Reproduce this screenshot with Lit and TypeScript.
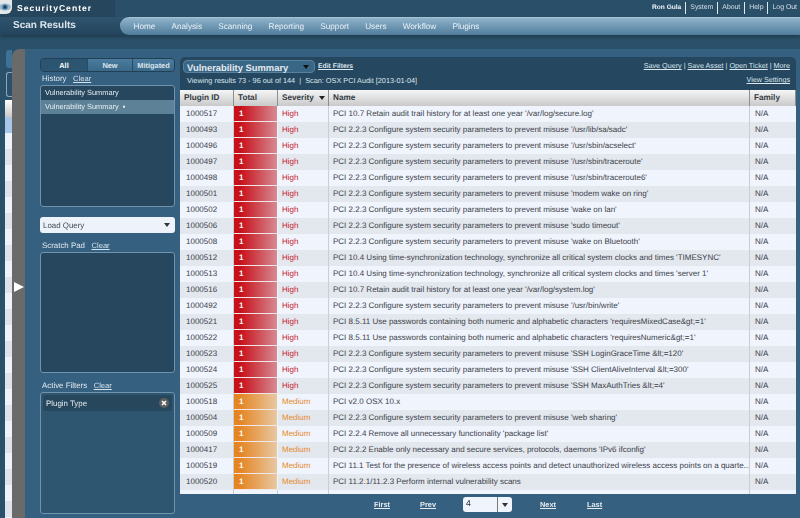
import { LitElement, html, css } from "lit";
import { customElement } from "lit/decorators.js";

const H = "High", M = "Medium";
const P = "PCI 2.2.3 Configure system security parameters to prevent misuse ";
const rows: [string, string, string][] = [
  ["1000517", H, "PCI 10.7 Retain audit trail history for at least one year '/var/log/secure.log'"],
  ["1000493", H, P + "'/usr/lib/sa/sadc'"],
  ["1000496", H, P + "'/usr/sbin/acselect'"],
  ["1000497", H, P + "'/usr/sbin/traceroute'"],
  ["1000498", H, P + "'/usr/sbin/traceroute6'"],
  ["1000501", H, P + "'modem wake on ring'"],
  ["1000502", H, P + "'wake on lan'"],
  ["1000506", H, P + "'sudo timeout'"],
  ["1000508", H, P + "'wake on Bluetooth'"],
  ["1000512", H, "PCI 10.4 Using time-synchronization technology, synchronize all critical system clocks and times 'TIMESYNC'"],
  ["1000513", H, "PCI 10.4 Using time-synchronization technology, synchronize all critical system clocks and times 'server 1'"],
  ["1000516", H, "PCI 10.7 Retain audit trail history for at least one year '/var/log/system.log'"],
  ["1000492", H, P + "'/usr/bin/write'"],
  ["1000521", H, "PCI 8.5.11 Use passwords containing both numeric and alphabetic characters 'requiresMixedCase&gt;=1'"],
  ["1000522", H, "PCI 8.5.11 Use passwords containing both numeric and alphabetic characters 'requiresNumeric&gt;=1'"],
  ["1000523", H, P + "'SSH LoginGraceTime &lt;=120'"],
  ["1000524", H, P + "'SSH ClientAliveInterval &lt;=300'"],
  ["1000525", H, P + "'SSH MaxAuthTries &lt;=4'"],
  ["1000518", M, "PCI v2.0 OSX 10.x"],
  ["1000504", M, P + "'web sharing'"],
  ["1000509", M, "PCI 2.2.4 Remove all unnecessary functionality 'package list'"],
  ["1000417", M, "PCI 2.2.2 Enable only necessary and secure services, protocols, daemons 'IPv6 ifconfig'"],
  ["1000519", M, "PCI 11.1 Test for the presence of wireless access points and detect unauthorized wireless access points on a quarte..."],
  ["1000520", M, "PCI 11.2.1/11.2.3 Perform internal vulnerability scans"],
];
const nav = ["Home", "Analysis", "Scanning", "Reporting", "Support", "Users", "Workflow", "Plugins"];

@customElement("app-root")
export class AppRoot extends LitElement {
  static styles = css`
    :host { display: block; width: 800px; height: 518px; overflow: hidden; background: #2b5069; font-family: "Liberation Sans", Arial, sans-serif; font-size: 8px; color: #e4ebf1; text-rendering: geometricPrecision; }
    * { box-sizing: border-box; }
    a { color: inherit; text-decoration: underline; }
    .shot { height: 518px; filter: blur(.25px); }
    .top { height: 17px; display: flex; align-items: center; background: #2a4f69; }
    .brand { width: 115px; height: 17px; display: flex; align-items: center; gap: 5px; background: #26465e; color: #fff; font-weight: 700; font-size: 8.6px; letter-spacing: 1px; padding-bottom: 1px; }
    .logo { width: 12px; height: 14px; background: #e4e8ea; border-radius: 0 0 6px 0; display: flex; align-items: center; margin-top: -2px; }
    .user { margin-left: auto; display: flex; align-items: center; font-size: 6.9px; color: #d5e0e8; padding-right: 3px; padding-bottom: 1px; }
    .user span { padding: 0 4px; border-right: 1px solid #e2e8ee; line-height: 12px; }
    .user span:first-child { font-weight: 700; font-size: 6.6px; color: #eef2f5; }
    .user span:last-child { border: 0; padding-right: 0; }
    .sub { height: 18px; display: flex; background: linear-gradient(#2f546e, #24445c); box-shadow: 0 2px 3px rgba(20, 40, 55, .5); position: relative; }
    .title { width: 120px; padding: 3px 0 0 13px; font-size: 10px; font-weight: 700; color: #dbe5ec; }
    .nav { flex: 1; display: flex; align-items: center; gap: 16.2px; padding: 0 0 1px 13.5px; border-radius: 9px 0 0 9px; background: linear-gradient(#8fb3cb, #4f7c9b); border-top: 1px solid #a6c3d6; color: #eaf1f6; font-size: 8.2px; height: 18px; }
    .band { height: 14px; background: #2b5069; }
    .desk { height: 469px; display: flex; position: relative; }
    .behind { width: 12px; background: #2b5069; display: flex; flex-direction: column; padding: 1px 0 0 6px; gap: 4px; overflow: hidden; }
    .b1 { height: 18px; flex: none; background: #3f7297; border-radius: 3px 0 0 3px; }
    .b2 { height: 25px; flex: none; border: 1px solid #8aa8bd; border-right: 0; border-radius: 3px 0 0 3px; background: #2b5069; }
    .b3 { flex: 1; margin-top: -1px; margin-left: -1px; display: flex; flex-direction: column; }
    .b3h { height: 17px; flex: none; background: linear-gradient(#fff, #c9c9c9); }
    .b3b { height: 16px; flex: none; background: #a9c6e6; }
    .b3r { flex: 1; background: repeating-linear-gradient(#eef2fa 0 16px, #dfe4ec 16px 32px); }
    .window { flex: 1; display: flex; background: #36607f; min-width: 0; border-radius: 8px 0 0 0; overflow: hidden; }
    .grip { width: 13px; background: #6a6a6a; display: flex; align-items: center; justify-content: center; padding-top: 7px; }
    .grip i { width: 0; height: 0; border-left: 10px solid #fff; border-top: 5px solid transparent; border-bottom: 5px solid transparent; }
    .left { width: 155px; padding: 9px 5px 0 15px; display: flex; flex-direction: column; }
    .tabs { display: grid; grid-template-columns: 46px 45px 1fr; height: 14px; border-radius: 4px; overflow: hidden; border: 1px solid #1f4057; }
    .tabs div { display: flex; align-items: center; justify-content: center; background: linear-gradient(#4b7da0, #3a6888); border-left: 1px solid #274b63; color: #dbe5ec; font-weight: 700; font-size: 7.4px; }
    .tabs div:first-child { background: #2b5570; border-left: 0; color: #fff; }
    .lab { height: 13px; flex: none; display: flex; align-items: center; gap: 6.5px; padding-left: 2px; font-size: 7.9px; color: #dfe7ee; }
    .lab a { font-size: 7.6px; color: #d3e1ec; }
    .spaced { margin-top: 6px; }
    .box { background: #26475e; border: 1px solid #7094ad; border-radius: 3px; }
    .history { height: 122px; flex: none; margin-bottom: 10px; }
    .history div { height: 14px; line-height: 13px; padding-left: 4px; font-size: 7.4px; color: #e6edf2; }
    .history div.sel { background: #5d8298; }
    .load { height: 16px; flex: none; background: #edf2fb; border-radius: 3px; display: flex; align-items: center; justify-content: space-between; padding: 0 5px 0 3px; color: #404a52; font-size: 7.9px; }
    .tri { width: 0; height: 0; border-left: 3.5px solid transparent; border-right: 3.5px solid transparent; border-top: 4px solid #333; }
    .scratch { height: 121px; flex: none; }
    .filters { height: 122px; flex: none; background: #2f5670; padding: 2px 2px; }
    .chip { height: 16px; background: #27475d; border-radius: 2px; display: flex; align-items: center; justify-content: space-between; padding: 0 3px 0 3px; color: #e4ebf1; font-size: 7.9px; }
    .chip svg { display: block; }
    .main { width: 616px; padding-top: 8px; display: flex; flex-direction: column; }
    .bar { height: 33px; background: #25475f; border-radius: 5px 5px 0 0; padding: 3px 6px 0 3px; display: grid; grid-template-columns: 1fr auto; }
    .barl { display: flex; flex-direction: column; }
    .barl1 { display: flex; align-items: center; gap: 3px; height: 13px; }
    .vs { width: 132px; height: 13px; background: #3a6685; border: 1px solid #56819e; border-radius: 4px; display: flex; align-items: center; justify-content: space-between; padding: 1px 5px 0 3px; font-weight: 700; font-size: 9.4px; color: #e4ebf1; }
    .vs .tri { border-top-color: #111; }
    .edit { font-size: 6.8px; font-weight: 700; color: #dce6ee; padding-bottom: 1px; }
    .view { padding: 3px 0 0 4px; font-size: 7.3px; line-height: 10px; color: #dce6ee; }
    .barr { text-align: right; font-size: 7.2px; color: #dce6ee; display: flex; flex-direction: column; gap: 5px; padding-top: 1px; }
    .barr div { line-height: 9px; }
    .grid { height: 404px; background: #f0f4fd; display: grid; grid-template-columns: 54px 44px 51px 421px 46px; align-content: start; color: #3a4048; }
    .grid > div { height: 16px; line-height: 15px; white-space: nowrap; overflow: hidden; }
    .grid > div.h { background: linear-gradient(#f6f6f6, #c9c9c9); font-weight: 700; font-size: 8.2px; color: #333a42; padding-left: 4px; border-right: 1px solid #8a8f94; line-height: 15px; }
    .grid > div.h:last-child { border: 0; }
    .grid > div.sev { display: flex; align-items: center; gap: 5px; padding-bottom: 1px; }
    .sev .tri { border-top-color: #222; }
    .c { padding-left: 5px; border-right: 1px solid #c9ced6; }
    .alt { background: #e3e7ee; }
    .id { font-size: 8px; padding-left: 6px; }
    .name { font-size: 8px; padding-left: 4px; }
    .fam { border: 0; font-size: 8px; padding-left: 5px; }
    .total { color: #fff; font-weight: 700; font-size: 8px; padding-left: 5px; border-bottom: 1px solid #f0e8e8; border-right: 1px solid #f0f4fd; }
    .total.High { background: linear-gradient(90deg, #c8101a, #c8101a 15%, #d68a92); }
    .total.Medium { background: linear-gradient(90deg, #e58420, #e58420 12%, #e8c8a2); }
    .lv { font-size: 8px; padding-left: 4px; }
    .lv.High { color: #c9222c; }
    .lv.Medium { color: #e68a2a; }
    .grid > div.vline { height: 4px; }
    .pager { flex: 1; display: grid; grid-template-columns: 46px 43px 77px 47px auto; align-items: center; padding: 0 0 3px 194px; color: #e4ebf1; font-weight: 700; font-size: 7.4px; }
    .pg { width: 49px; height: 15px; background: #f0f4fd; border-radius: 3px; display: grid; grid-template-columns: 35px 14px; color: #333; font-size: 8.6px; font-weight: 400; }
    .pg span { padding: 1px 0 0 3px; border-right: 1px solid #777; }
    .pg div { display: flex; align-items: center; justify-content: center; }
  `;
  row(r: [string, string, string], i: number) {
    const alt = i % 2 ? "alt" : "";
    return html`
      <div class="c id ${alt}">${r[0]}</div>
      <div class="total ${r[1]}">1</div>
      <div class="c lv ${r[1]} ${alt}">${r[1]}</div>
      <div class="c name ${alt}">${r[2]}</div>
      <div class="c fam ${alt}">N/A</div>`;
  }
  render() {
    return html`
      <div class="shot">
      <div class="top">
        <div class="brand"><div class="logo"><svg width="12" height="10" viewBox="0 0 12 10"><ellipse cx="5" cy="5" rx="6" ry="3.4" fill="#9fb6c4"/><circle cx="5" cy="5" r="2.6" fill="#2f6f9f"/><circle cx="5" cy="5" r="1" fill="#12293a"/></svg></div>SecurityCenter</div>
        <div class="user"><span>Ron Gula</span><span>System</span><span>About</span><span>Help</span><span>Log Out</span></div>
      </div>
      <div class="sub"><div class="title">Scan Results</div><div class="nav">${nav.map((n) => html`<span>${n}</span>`)}</div></div>
      <div class="band"></div>
      <div class="desk">
        <div class="behind"><div class="b1"></div><div class="b2"></div><div class="b3"><div class="b3h"></div><div class="b3b"></div><div class="b3r"></div></div></div>
        <div class="window">
          <div class="grip"><i></i></div>
          <div class="left">
            <div class="tabs"><div>All</div><div>New</div><div>Mitigated</div></div>
            <div class="lab">History <a href="#">Clear</a></div>
            <div class="box history"><div>Vulnerability Summary</div><div class="sel">Vulnerability Summary &nbsp;▪</div></div>
            <div class="load">Load Query <span class="tri"></span></div>
            <div class="lab spaced">Scratch Pad <a href="#">Clear</a></div>
            <div class="box scratch"></div>
            <div class="lab spaced">Active Filters <a href="#">Clear</a></div>
            <div class="box filters"><div class="chip">Plugin Type <svg width="10" height="10" viewBox="0 0 10 10"><circle cx="5" cy="5" r="5" fill="#5c5f60"/><path d="M3 3l4 4M7 3l-4 4" stroke="#fff" stroke-width="1.5"/></svg></div></div>
          </div>
          <div class="main">
            <div class="bar">
              <div class="barl">
                <div class="barl1"><div class="vs">Vulnerability Summary <span class="tri"></span></div><a class="edit" href="#">Edit Filters</a></div>
                <div class="view">Viewing results 73 - 96 out of 144 &nbsp;|&nbsp; Scan: OSX PCI Audit [2013-01-04]</div>
              </div>
              <div class="barr"><div><a href="#">Save Query</a> | <a href="#">Save Asset</a> | <a href="#">Open Ticket</a> | <a href="#">More</a></div><div><a href="#">View Settings</a></div></div>
            </div>
            <div class="grid">
              <div class="h">Plugin ID</div><div class="h">Total</div><div class="h sev">Severity <span class="tri"></span></div><div class="h">Name</div><div class="h">Family</div>
              ${rows.map((r, i) => this.row(r, i))}
              <div class="c vline"></div><div class="c vline"></div><div class="c vline"></div><div class="c vline"></div><div class="vline"></div>
            </div>
            <div class="pager"><a href="#">First</a><a href="#">Prev</a><span class="pg"><span>4</span><div><i class="tri"></i></div></span><a href="#">Next</a><a href="#">Last</a></div>
          </div>
        </div>
      </div>
      </div>`;
  }
}
